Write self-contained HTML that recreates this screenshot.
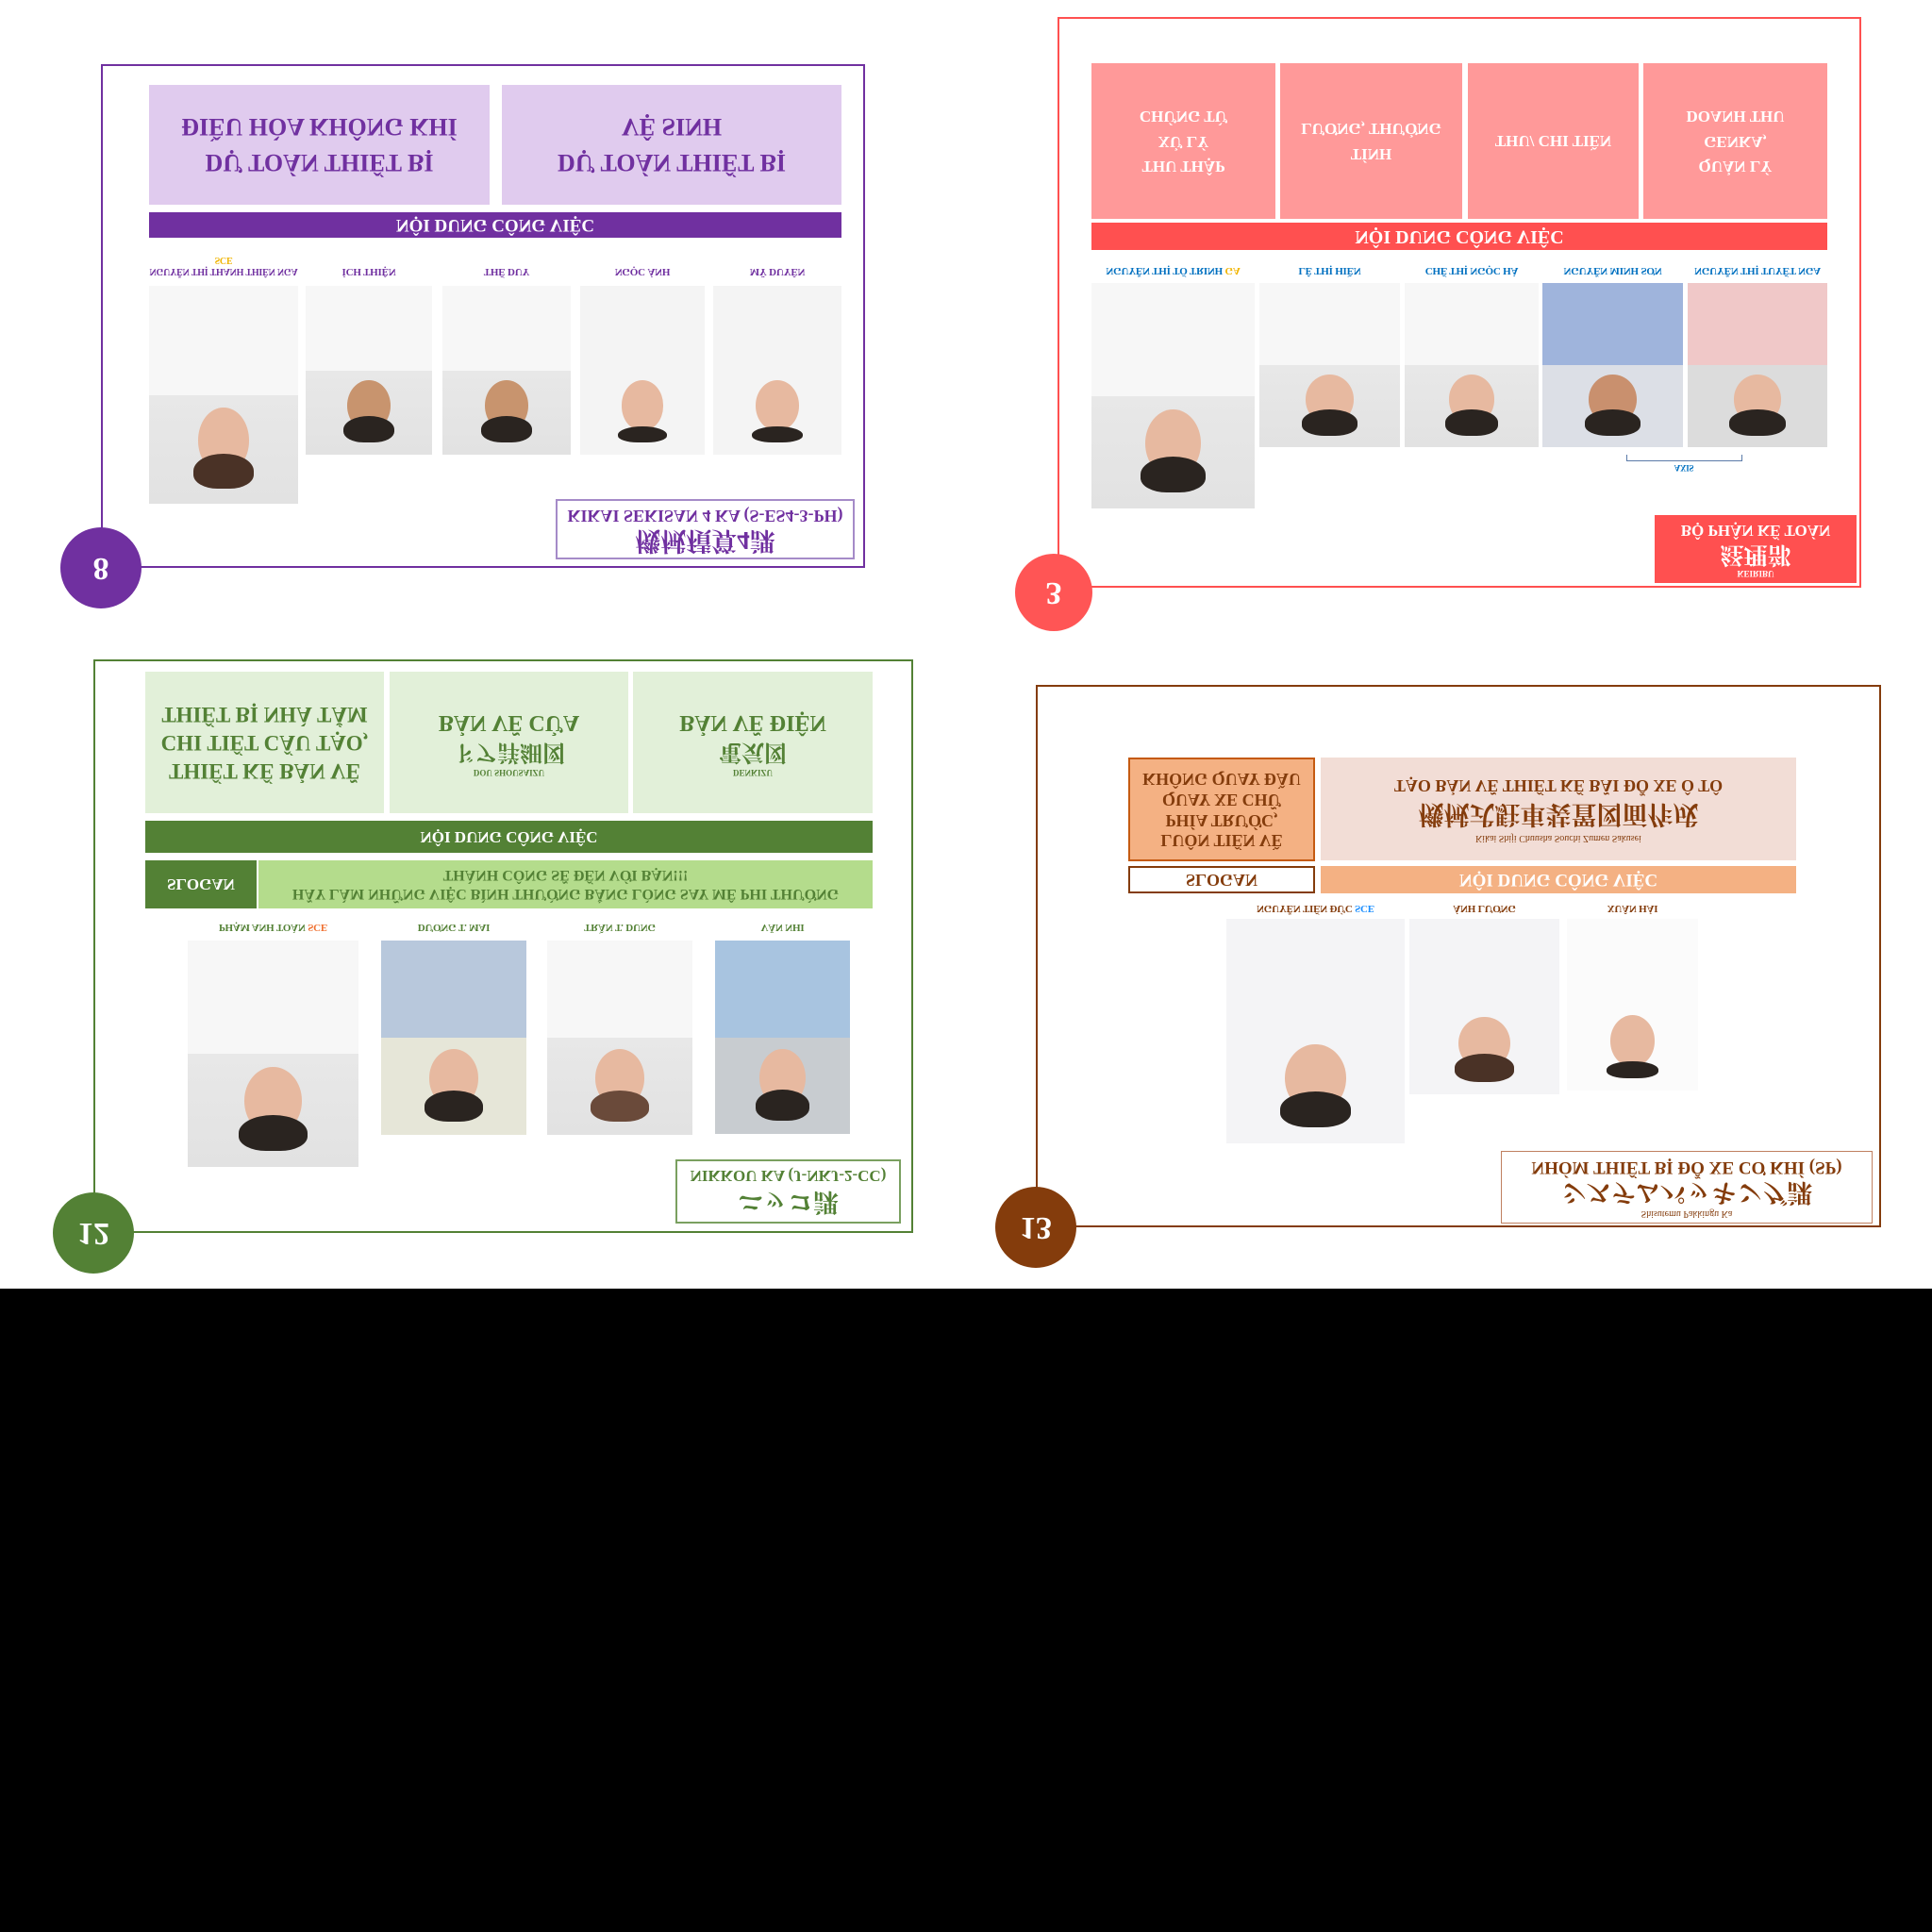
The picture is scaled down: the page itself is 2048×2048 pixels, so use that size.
<!DOCTYPE html>
<html><head><meta charset="utf-8"><style>
*{margin:0;padding:0;box-sizing:border-box}
body{width:2048px;height:2048px;background:#000;position:relative;overflow:hidden;font-family:"Liberation Serif","Noto Serif CJK SC",serif;font-weight:bold}
#top{position:absolute;left:0;top:0;width:2048px;height:1366px;background:#fff}
.a{position:absolute}
.bx{position:absolute;display:flex;flex-direction:column;align-items:center;justify-content:center;text-align:center;transform:scaleY(-1);line-height:1.25;white-space:nowrap}
.circ{position:absolute;border-radius:50%;color:#fff;display:flex;align-items:center;justify-content:center;font-size:34px;transform:scaleY(-1)}
.nm{position:absolute;font-size:11px;text-align:center;transform:scaleY(-1);white-space:nowrap;letter-spacing:-0.2px}
.ph{position:absolute;background:linear-gradient(#eeeeee,#e2e2e2);overflow:hidden}
.ph .sk{position:absolute;left:33%;width:34%;bottom:14%;height:30%;background:#e7b9a0;border-radius:50%}
.ph .hr{position:absolute;left:30%;width:40%;bottom:7%;height:16%;background:#2a2420;border-radius:50% 50% 40% 40%}
.ph .sh{position:absolute;left:0;right:0;top:0;height:50%;background:#f7f7f7}
</style></head><body>
<div id="top">

<!-- Panel 8 purple -->
<div class="a" style="left:107px;top:68px;width:810px;height:534px;border:2px solid #7030a0"></div>
<div class="circ" style="left:64px;top:559px;width:86px;height:86px;background:#7030a0">8</div>
<div class="bx" style="left:158px;top:90px;width:361px;height:127px;background:#e0cbee;color:#7030a0;font-size:26px;line-height:1.45"><div>DỰ TOÁN THIẾT BỊ</div><div>ĐIỀU HÒA KHÔNG KHÍ</div></div>
<div class="bx" style="left:532px;top:90px;width:360px;height:127px;background:#e0cbee;color:#7030a0;font-size:26px;line-height:1.45"><div>DỰ TOÁN THIẾT BỊ</div><div>VỆ SINH</div></div>
<div class="bx" style="left:158px;top:225px;width:734px;height:27px;background:#7030a0;color:#fff;font-size:19px">NỘI DUNG CÔNG VIỆC</div>
<div class="nm" style="left:150px;top:282px;width:174px;color:#7030a0;font-size:10px">NGUYỄN THỊ THANH THIÊN NGA</div>
<div class="nm" style="left:158px;top:270px;width:158px;color:#f0b400;font-size:10px">SCE</div>
<div class="nm" style="left:324px;top:282px;width:134px;color:#7030a0">ÍCH THIỆN</div>
<div class="nm" style="left:469px;top:282px;width:136px;color:#7030a0">THẾ DUY</div>
<div class="nm" style="left:615px;top:282px;width:132px;color:#7030a0">NGỌC ÁNH</div>
<div class="nm" style="left:756px;top:282px;width:136px;color:#7030a0">MỸ DUYÊN</div>
<div class="ph" style="left:158px;top:303px;width:158px;height:231px"><div class="sh"></div><div class="sk"></div><div class="hr" style="background:#4a3226"></div></div>
<div class="ph" style="left:324px;top:303px;width:134px;height:179px"><div class="sh"></div><div class="sk" style="background:#c8946e"></div><div class="hr"></div></div>
<div class="ph" style="left:469px;top:303px;width:136px;height:179px"><div class="sh"></div><div class="sk" style="background:#c8946e"></div><div class="hr"></div></div>
<div class="ph" style="left:615px;top:303px;width:132px;height:179px;background:#f4f4f4"><div class="sk"></div><div class="hr" style="height:10%"></div></div>
<div class="ph" style="left:756px;top:303px;width:136px;height:179px;background:#f4f4f4"><div class="sk"></div><div class="hr" style="height:10%"></div></div>
<div class="bx" style="left:589px;top:529px;width:317px;height:64px;border:2px solid #a58bc8;color:#7030a0;font-size:18px;line-height:1.2"><div style="font-size:27px;line-height:1.1">機械積算4課</div><div>KIKAI SEKISAN 4 KA (S-ES4-3-PH)</div></div>

<!-- Panel 3 red -->
<div class="a" style="left:1121px;top:18px;width:852px;height:605px;border:2px solid #ff5050"></div>
<div class="circ" style="left:1076px;top:587px;width:82px;height:82px;background:#ff5555">3</div>
<div class="bx" style="left:1157px;top:67px;width:195px;height:165px;background:#ff9999;color:#fff;font-size:17px;line-height:1.55"><div>THU THẬP</div><div>XỬ LÝ</div><div>CHỨNG TỪ</div></div>
<div class="bx" style="left:1357px;top:67px;width:193px;height:165px;background:#ff9999;color:#fff;font-size:17px;line-height:1.55"><div>TÍNH</div><div>LƯƠNG, THƯỞNG</div></div>
<div class="bx" style="left:1556px;top:67px;width:181px;height:165px;background:#ff9999;color:#fff;font-size:17px">THU/ CHI TIỀN</div>
<div class="bx" style="left:1742px;top:67px;width:195px;height:165px;background:#ff9999;color:#fff;font-size:17px;line-height:1.55"><div>QUẢN LÝ</div><div>GENKA,</div><div>DOANH THU</div></div>
<div class="bx" style="left:1157px;top:236px;width:780px;height:29px;background:#ff5050;color:#fff;font-size:20px">NỘI DUNG CÔNG VIỆC</div>
<div class="nm" style="left:1157px;top:281px;width:173px;color:#0070c0">NGUYỄN THỊ TỐ TRINH <span style="color:#f0b400">GA</span></div>
<div class="nm" style="left:1335px;top:281px;width:149px;color:#0070c0">LÊ THỊ HIỀN</div>
<div class="nm" style="left:1489px;top:281px;width:142px;color:#0070c0">CHẾ THỊ NGỌC HÀ</div>
<div class="nm" style="left:1635px;top:281px;width:149px;color:#0070c0">NGUYỄN MINH SƠN</div>
<div class="nm" style="left:1789px;top:281px;width:148px;color:#0070c0">NGUYỄN THỊ TUYẾT NGA</div>
<div class="ph" style="left:1157px;top:300px;width:173px;height:239px"><div class="sh"></div><div class="sk"></div><div class="hr"></div></div>
<div class="ph" style="left:1335px;top:300px;width:149px;height:174px"><div class="sh"></div><div class="sk"></div><div class="hr"></div></div>
<div class="ph" style="left:1489px;top:300px;width:142px;height:174px"><div class="sh"></div><div class="sk"></div><div class="hr"></div></div>
<div class="ph" style="left:1635px;top:300px;width:149px;height:174px;background:#dcdfe6"><div class="sh" style="background:#9fb4dc"></div><div class="sk" style="background:#c9906e"></div><div class="hr"></div></div>
<div class="ph" style="left:1789px;top:300px;width:148px;height:174px;background:#dcdcdc"><div class="sh" style="background:#f0c8c8"></div><div class="sk"></div><div class="hr"></div></div>
<div class="a" style="left:1724px;top:482px;width:123px;height:7px;border:1px solid #5a7aa8;border-top:none"></div>
<div class="nm" style="left:1755px;top:491px;width:60px;color:#0070c0;font-size:9px">AXIS</div>
<div class="bx" style="left:1754px;top:546px;width:214px;height:72px;background:#ff5050;color:#fff;font-size:17px;line-height:1.2"><div style="font-size:9px">KEIRIBU</div><div style="font-size:25px">経理部</div><div>BỘ PHẬN KẾ TOÁN</div></div>

<!-- Panel 12 green -->
<div class="a" style="left:99px;top:699px;width:869px;height:608px;border:2px solid #538135"></div>
<div class="circ" style="left:56px;top:1264px;width:86px;height:86px;background:#538135">12</div>
<div class="bx" style="left:154px;top:712px;width:253px;height:150px;background:#e2f0d9;color:#538135;font-size:23px;line-height:1.3"><div>THIẾT KẾ BẢN VẼ</div><div>CHI TIẾT CẤU TẠO,</div><div>THIẾT BỊ NHÀ TẮM</div></div>
<div class="bx" style="left:413px;top:712px;width:253px;height:150px;background:#e2f0d9;color:#538135;font-size:24px;line-height:1.3"><div style="font-size:9px">DOU SHOUSAIZU</div><div>ドア詳細図</div><div>BẢN VẼ CỬA</div></div>
<div class="bx" style="left:671px;top:712px;width:254px;height:150px;background:#e2f0d9;color:#538135;font-size:24px;line-height:1.3"><div style="font-size:9px">DENKIZU</div><div>電気図</div><div>BẢN VẼ ĐIỆN</div></div>
<div class="bx" style="left:154px;top:870px;width:771px;height:34px;background:#538135;color:#fff;font-size:17px">NỘI DUNG CÔNG VIỆC</div>
<div class="bx" style="left:154px;top:912px;width:118px;height:51px;background:#538135;color:#fff;font-size:17px">SLOGAN</div>
<div class="bx" style="left:274px;top:912px;width:651px;height:51px;background:#b4dc8c;color:#538135;font-size:16px;line-height:1.2"><div>HÃY LÀM NHỮNG VIỆC BÌNH THƯỜNG BẰNG LÒNG SAY MÊ PHI THƯỜNG</div><div>THÀNH CÔNG SẼ ĐẾN VỚI BẠN!!!</div></div>
<div class="nm" style="left:199px;top:977px;width:181px;color:#538135">PHẠM ANH TOÀN <span style="color:#f07030">SCE</span></div>
<div class="nm" style="left:404px;top:977px;width:154px;color:#538135">DƯƠNG T. MAI</div>
<div class="nm" style="left:580px;top:977px;width:154px;color:#538135">TRẦN T. DUNG</div>
<div class="nm" style="left:758px;top:977px;width:143px;color:#538135">VĂN NHI</div>
<div class="ph" style="left:199px;top:997px;width:181px;height:240px"><div class="sh"></div><div class="sk"></div><div class="hr"></div></div>
<div class="ph" style="left:404px;top:997px;width:154px;height:206px;background:#e6e6d8"><div class="sh" style="background:#b8c8dc"></div><div class="sk"></div><div class="hr"></div></div>
<div class="ph" style="left:580px;top:997px;width:154px;height:206px"><div class="sh"></div><div class="sk"></div><div class="hr" style="background:#6a4a3a"></div></div>
<div class="ph" style="left:758px;top:997px;width:143px;height:205px;background:#c8ccd0"><div class="sh" style="background:#a8c4e0"></div><div class="sk"></div><div class="hr"></div></div>
<div class="bx" style="left:716px;top:1229px;width:239px;height:68px;border:2px solid #7aa060;color:#538135;font-size:17px;line-height:1.25"><div style="font-size:27px">ニッコ課</div><div>NIKKOU KA (J-NKJ-2-CC)</div></div>

<!-- Panel 13 brown -->
<div class="a" style="left:1098px;top:726px;width:896px;height:575px;border:2px solid #843c0c"></div>
<div class="circ" style="left:1055px;top:1258px;width:86px;height:86px;background:#843c0c">13</div>
<div class="bx" style="left:1196px;top:803px;width:198px;height:110px;background:#f4b183;border:2px solid #c55a11;color:#843c0c;font-size:18px;line-height:1.2"><div>LUÔN TIẾN VỀ</div><div>PHÍA TRƯỚC,</div><div>QUAY XE CHỮ</div><div>KHÔNG QUAY ĐẦU</div></div>
<div class="bx" style="left:1400px;top:803px;width:504px;height:109px;background:#f2ddd6;color:#843c0c;font-size:18px;line-height:1.35"><div style="font-size:10px;font-weight:normal">Kikai Shiji Chuusha Souchi Zumen Sakusei</div><div style="font-size:27px">機械式駐車装置図面作成</div><div>TẠO BẢN VẼ THIẾT KẾ BÃI ĐỖ XE Ô TÔ</div></div>
<div class="bx" style="left:1196px;top:918px;width:198px;height:29px;background:#fff;border:2px solid #843c0c;color:#843c0c;font-size:18px">SLOGAN</div>
<div class="bx" style="left:1400px;top:918px;width:504px;height:29px;background:#f4b183;color:#fff;font-size:19px">NỘI DUNG CÔNG VIỆC</div>
<div class="nm" style="left:1300px;top:957px;width:189px;color:#843c0c">NGUYỄN TIẾN ĐỨC <span style="color:#1e90ff">SCE</span></div>
<div class="nm" style="left:1494px;top:957px;width:159px;color:#843c0c">ÁNH LƯƠNG</div>
<div class="nm" style="left:1661px;top:957px;width:139px;color:#843c0c">XUÂN HẢI</div>
<div class="ph" style="left:1300px;top:974px;width:189px;height:238px;background:#f4f4f6"><div class="sk"></div><div class="hr"></div></div>
<div class="ph" style="left:1494px;top:974px;width:159px;height:186px;background:#f4f4f6"><div class="sk"></div><div class="hr" style="background:#4a3226"></div></div>
<div class="ph" style="left:1661px;top:974px;width:139px;height:182px;background:#fbfbfb"><div class="sk"></div><div class="hr" style="height:10%"></div></div>
<div class="bx" style="left:1591px;top:1220px;width:394px;height:77px;border:1px solid #c08060;color:#843c0c;font-size:19px;line-height:1.2"><div style="font-size:10px;font-weight:normal">Shisutemu Pakkingu Ka</div><div style="font-size:27px">システムパッキング課</div><div>NHÓM THIẾT BỊ ĐỖ XE CƠ KHÍ (SP)</div></div>

</div>
</body></html>
